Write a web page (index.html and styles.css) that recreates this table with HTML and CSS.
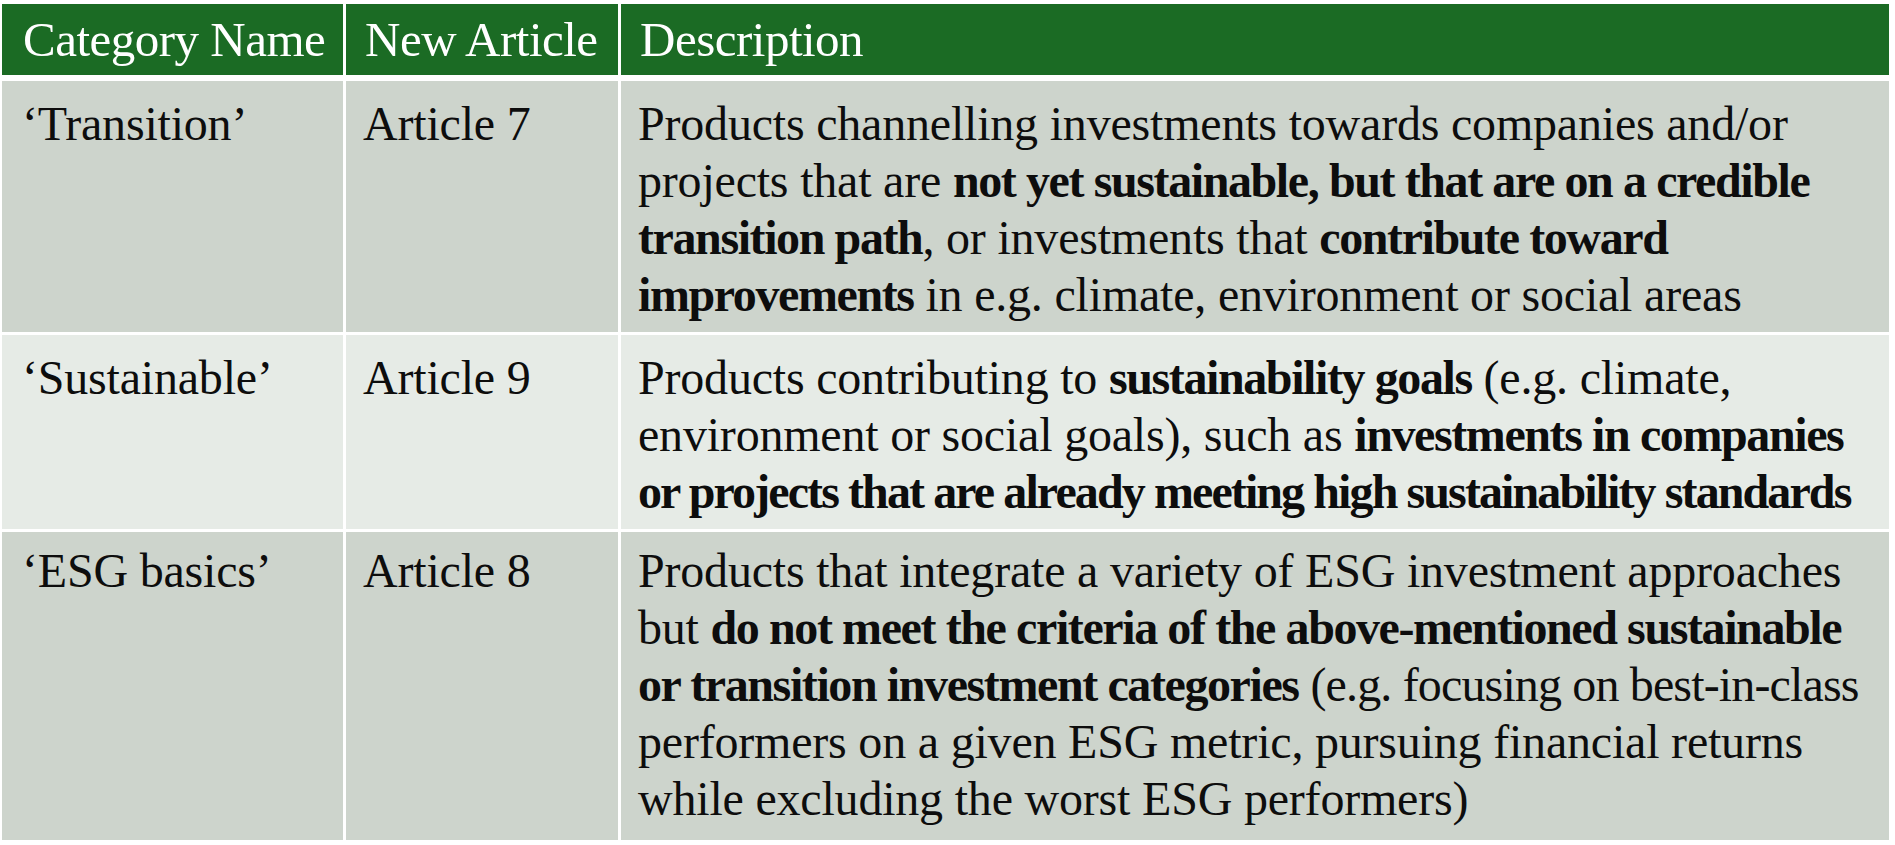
FILE: index.html
```html
<!DOCTYPE html>
<html lang="en">
<head>
<meta charset="utf-8">
<title>SFDR categories</title>
<link rel="stylesheet" href="styles.css">
</head>
<body>
<table class="cats">
  <colgroup>
    <col class="c1">
    <col class="c2">
    <col class="c3">
  </colgroup>
  <thead>
    <tr>
      <th>Category Name</th>
      <th>New Article</th>
      <th>Description</th>
    </tr>
  </thead>
  <tbody>
    <tr class="dark">
      <td>‘Transition’</td>
      <td>Article 7</td>
      <td class="desc">Products channelling investments towards companies and/or<br>projects that are <b>not yet sustainable, but that are on a credible<br>transition path</b>, or investments that <b>contribute toward<br>improvements</b> in e.g. climate, environment or social areas</td>
    </tr>
    <tr class="light">
      <td>‘Sustainable’</td>
      <td>Article 9</td>
      <td class="desc">Products contributing to <b>sustainability goals</b> (e.g. climate,<br>environment or social goals), such as <b>investments in companies</b><br><b class="tight">or projects that are already meeting high sustainability standards</b></td>
    </tr>
    <tr class="dark last">
      <td>‘ESG basics’</td>
      <td>Article 8</td>
      <td class="desc">Products that integrate a variety of ESG investment approaches<br>but <b>do not meet the criteria of the above-mentioned sustainable<br>or transition investment categories</b> <span class="snug">(e.g. focusing on best-in-class</span><br>performers on a given ESG metric, pursuing financial returns<br>while excluding the worst ESG performers)</td>
    </tr>
  </tbody>
</table>
</body>
</html>
```
FILE: styles.css
```css
html, body {
  margin: 0;
  padding: 0;
  background: #ffffff;
}
body {
  padding: 4px 0 0 2px;
  font-family: "Liberation Serif", "Times New Roman", serif;
  color: #0d0d0d;
}
.cats {
  border-collapse: separate;
  border-spacing: 0;
  width: 1887px;
  table-layout: fixed;
}
.c1 { width: 344px; }
.c2 { width: 275px; }
.c3 { width: auto; }
.cats th,
.cats td {
  text-align: left;
  vertical-align: top;
  border-right: 3px solid #fff;
  border-bottom: 3px solid #fff;
}
.cats th:last-child,
.cats td:last-child {
  border-right: 0;
}
.cats th {
  background: #1b6b24;
  color: #fff;
  font-weight: normal;
  font-size: 49px;
  line-height: 52px;
  height: 71px;
  padding: 0 0 0 19px;
  vertical-align: middle;
  border-bottom-width: 6px;
  letter-spacing: -0.5px;
}
.cats th:first-child { padding-left: 21px; }
.cats td {
  font-size: 48px;
  line-height: 57px;
  padding: 14px 0 9px 17px;
  letter-spacing: -0.2px;
}
.cats td:first-child { padding-left: 20px; }
.cats .last td {
  padding-top: 10px;
  padding-bottom: 13px;
}
.cats td.desc { white-space: nowrap; }
.cats td b {
  font-weight: bold;
  letter-spacing: -1.4px;
}
.cats td b.tight { letter-spacing: -1.9px; }
.cats td .snug { letter-spacing: -0.85px; }
.dark td { background: #cdd4cc; }
.light td { background: #e6ebe6; }
```
